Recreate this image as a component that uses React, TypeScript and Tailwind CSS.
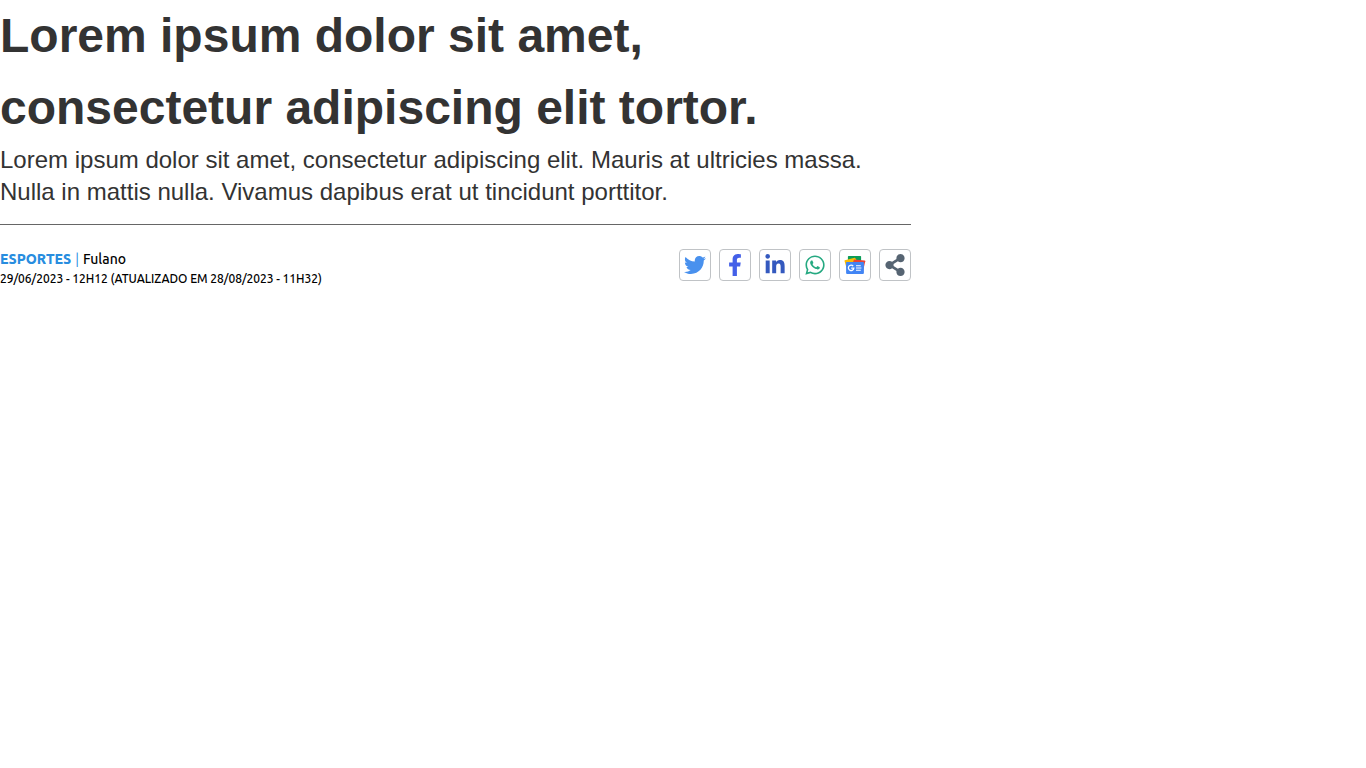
import type { ReactNode } from 'react';
import { FaTwitter, FaFacebookF, FaLinkedinIn, FaWhatsapp, FaShareAlt } from 'react-icons/fa';

function GoogleNews() {
  return (
    <svg width="22" height="20" viewBox="0 0 22 20" aria-hidden="true">
      <path fill="#0c9d58" d="M4.6 1h11.8q.7 0 .7.7V9H3.9V1.7q0-.7.7-.7z" />
      <path fill="#fbbc04" d="M.9 5.3 10.6 2.7q.6-.1.8.5L15 9 3.6 16.5.5 6q-.1-.6.4-.7z" />
      <path fill="#ea4335" d="m10 4.6 10.7.9q.7.1.6.8L19 16 8 10z" />
      <path fill="#4285f4" d="M2.8 7h16.4q.7 0 .7.7V18q0 1-1 1H3.1q-1 0-1-1V7.7q0-.7.7-.7z" />
      <path fill="none" stroke="#fff" strokeWidth="1.3" d="M9.2 11.1a2.7 2.7 0 1 0 .6 2H7.2" />
      <path fill="none" stroke="#fff" strokeWidth="1.1" d="M12 10.7h4.8M12 13h5.4M12 15.3h4.8" />
    </svg>
  );
}

function ShareButton({ label, children }: { label: string; children: ReactNode }) {
  return (
    <button
      aria-label={label}
      className="flex h-8 w-8 items-center justify-center rounded border border-[#c0c3c6] bg-white"
    >
      {children}
    </button>
  );
}

export default function App() {
  return (
    <article className="w-[911px] font-['Liberation_Sans',Arial,sans-serif] text-[#333]">
      <h1 className="text-5xl leading-[72px] font-bold">
        Lorem ipsum dolor sit amet,
        <br />
        consectetur adipiscing elit tortor.
      </h1>
      <p className="text-2xl leading-8">
        Lorem ipsum dolor sit amet, consectetur adipiscing elit. Mauris at ultricies massa.
        <br />
        Nulla in mattis nulla. Vivamus dapibus erat ut tincidunt porttitor.
      </p>
      <div className="mt-4 flex justify-between border-t border-[#666] pt-6">
        <div className="font-[Ubuntu,'Noto_Sans',sans-serif] font-medium text-black">
          <div className="h-5 text-sm leading-5 whitespace-nowrap">
            <span className="text-[#288ddf]">
              <strong className="font-extrabold">ESPORTES</strong>
              <span className="mr-1 ml-1 font-normal">|</span>
            </span>
            Fulano
          </div>
          <div className="text-xs leading-5 tracking-[-0.035px] whitespace-nowrap">
            29/06/2023 - 12H12 (ATUALIZADO EM 28/08/2023 - 11H32)
          </div>
        </div>
        <div className="flex gap-2">
          <ShareButton label="Twitter"><FaTwitter size={22} color="#4991ee" /></ShareButton>
          <ShareButton label="Facebook"><FaFacebookF size={22} color="#4460e8" /></ShareButton>
          <ShareButton label="LinkedIn"><FaLinkedinIn size={22} color="#3459bf" /></ShareButton>
          <ShareButton label="WhatsApp"><FaWhatsapp size={22} color="#25a981" /></ShareButton>
          <ShareButton label="Google News"><GoogleNews /></ShareButton>
          <ShareButton label="Share"><FaShareAlt size={22} color="#566472" /></ShareButton>
        </div>
      </div>
    </article>
  );
}
